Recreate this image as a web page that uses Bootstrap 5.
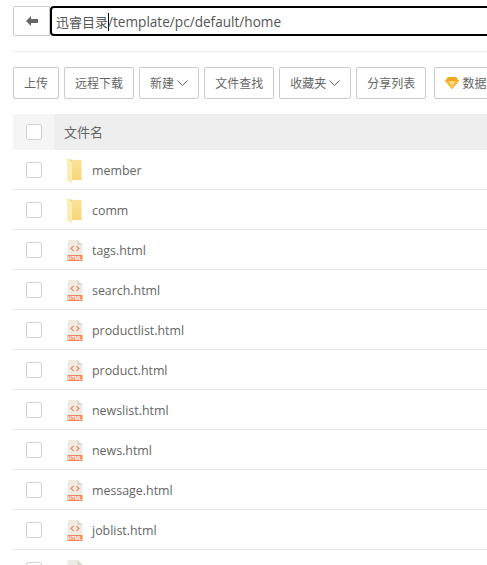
<!DOCTYPE html>
<html lang="zh"><head><meta charset="utf-8"><title>文件管理</title>
<link rel="stylesheet" href="https://cdn.jsdelivr.net/npm/bootstrap@5.3.0/dist/css/bootstrap.min.css">
<style>
html,body{height:565px;overflow:hidden;background:#fff}
body{font-family:"Open Sans","Noto Sans CJK SC",sans-serif;font-size:13px;color:#666}
.fm-page{width:800px;padding:6px 0 0 13px}
.fm-path{height:30px;flex-wrap:nowrap}
.fm-back{width:37px;height:30px;padding:0;border:1px solid #ccc;border-radius:2px 0 0 2px;background:#fff;display:flex;align-items:center;justify-content:center}
.fm-input{flex:1;height:30px;border:2px solid #000;border-radius:4px;padding:0 4px;font-size:13.6px;line-height:28px;color:#555;white-space:nowrap}
.fm-cjk{font-size:13px}
.fm-caret{display:inline-block;width:1px;height:18px;background:#000;vertical-align:-4px;margin-right:-1px}
.fm-rule{border-top:1px solid #eee;margin:15px 0 15px;opacity:1}
.fm-tools{gap:5px;flex-wrap:nowrap;margin-bottom:15px}
.fm-btn{height:32px;padding:2px 10px 0;border:1px solid #ccc;border-radius:2px;background:#fff;color:#666;font-size:12px;line-height:28px;white-space:nowrap;flex:none}
.fm-btn svg{vertical-align:1px}
.fm-gem{margin-left:3px}
.fm-row{height:40px;border-bottom:1px solid #e7e7e7;align-items:center}
.fm-head{height:36px;background:#eee;border:0;align-items:center}
.fm-check{width:41px;height:100%;display:flex;align-items:center;justify-content:center;flex:none}
.fm-head .fm-check{background:#f5f5f5}
.fm-box{width:16px;height:16px;border:1px solid #d2d2d2;border-radius:2px;background:#fff;display:block;margin-right:-1px}
.fm-icon{width:16px;margin:2px 9px 0 13px;flex:none;display:block}
.fm-name{font-size:12.4px;color:#666;padding-top:3px}
.fm-title{margin-left:10px;font-size:13px;color:#666;padding-top:2px}
</style></head>
<body>
<svg width="0" height="0" class="position-absolute">
<defs>
<linearGradient id="fg" x1="0" y1="0" x2="0" y2="1"><stop offset="0" stop-color="#fbe49b"/><stop offset="1" stop-color="#f8d371"/></linearGradient>
<symbol id="folder" viewBox="0 0 16 24">
<path d="M0 0H4L5 1H14.500V20.500H16V21H5V24L0 21Z" fill="url(#fg)"/>
<path d="M0 0L5 3.500V24L0 21Z" fill="#fcedb7"/>
<path d="M5 3.500L4 2.500V1H5Z" fill="#f4d27c"/>
</symbol>
<symbol id="html" viewBox="0 0 15 21">
<path d="M0 0H10L15 5V15H0Z" fill="#edebe3"/>
<path d="M10 0L15 5H10Z" fill="#d9d6cb"/>
<rect y="15" width="15" height="6" fill="#f0845a"/>
<path d="M6 6L3.500 8.500L6 11M9 6L11.500 8.500L9 11" fill="none" stroke="#ee8a62" stroke-width="1.200"/>
<text x="7.500" y="20" font-size="5" font-weight="700" text-anchor="middle" fill="#fff" font-family="Liberation Sans,sans-serif">HTML</text>
</symbol>
</defs>
</svg>
<div class="fm-page">
  <div class="fm-path d-flex">
    <button class="fm-back" type="button" aria-label="返回"><svg width="12" height="10" viewBox="0 0 12 10"><path d="M0 5L5 0V3H12V7H5V10Z" fill="#666"/></svg></button>
    <div class="fm-input"><span class="fm-cjk">迅睿目录</span><span class="fm-caret"></span>/template/pc/default/home</div>
  </div>
  <hr class="fm-rule">
  <div class="fm-tools d-flex">
    <button class="fm-btn" type="button">上传</button>
    <button class="fm-btn" type="button">远程下载</button>
    <button class="fm-btn" type="button">新建 <svg width="11" height="7" viewBox="0 0 11 7"><path d="M.5 .5L5.500 5.500L10.500 .5" fill="none" stroke="#666"/></svg></button>
    <button class="fm-btn" type="button">文件查找</button>
    <button class="fm-btn" type="button">收藏夹 <svg width="11" height="7" viewBox="0 0 11 7"><path d="M.5 .5L5.500 5.500L10.500 .5" fill="none" stroke="#666"/></svg></button>
    <button class="fm-btn" type="button">分享列表</button>
    <button class="fm-btn fm-gem" type="button"><svg width="14" height="12" viewBox="0 0 14 12" style="vertical-align:-1px"><path d="M3 0H11L14 4L7 12L0 4Z" fill="#f5a623"/><path d="M0 4H14L7 12Z" fill="#f9b93f"/><path d="M4 4L7 11L10 4Z" fill="#fdd77a"/></svg> 数据</button>
  </div>
  <div class="fm-head d-flex"><div class="fm-check"><span class="fm-box"></span></div><div class="fm-title">文件名</div></div>
  <div id="fm-rows">
    <div class="fm-row d-flex"><div class="fm-check"><span class="fm-box"></span></div><svg class="fm-icon" width="16" height="24"><use href="#folder"/></svg><div class="fm-name">member</div></div>
    <div class="fm-row d-flex"><div class="fm-check"><span class="fm-box"></span></div><svg class="fm-icon" width="16" height="24"><use href="#folder"/></svg><div class="fm-name">comm</div></div>
    <div class="fm-row d-flex"><div class="fm-check"><span class="fm-box"></span></div><svg class="fm-icon" width="16" height="21"><use href="#html"/></svg><div class="fm-name">tags.html</div></div>
    <div class="fm-row d-flex"><div class="fm-check"><span class="fm-box"></span></div><svg class="fm-icon" width="16" height="21"><use href="#html"/></svg><div class="fm-name">search.html</div></div>
    <div class="fm-row d-flex"><div class="fm-check"><span class="fm-box"></span></div><svg class="fm-icon" width="16" height="21"><use href="#html"/></svg><div class="fm-name">productlist.html</div></div>
    <div class="fm-row d-flex"><div class="fm-check"><span class="fm-box"></span></div><svg class="fm-icon" width="16" height="21"><use href="#html"/></svg><div class="fm-name">product.html</div></div>
    <div class="fm-row d-flex"><div class="fm-check"><span class="fm-box"></span></div><svg class="fm-icon" width="16" height="21"><use href="#html"/></svg><div class="fm-name">newslist.html</div></div>
    <div class="fm-row d-flex"><div class="fm-check"><span class="fm-box"></span></div><svg class="fm-icon" width="16" height="21"><use href="#html"/></svg><div class="fm-name">news.html</div></div>
    <div class="fm-row d-flex"><div class="fm-check"><span class="fm-box"></span></div><svg class="fm-icon" width="16" height="21"><use href="#html"/></svg><div class="fm-name">message.html</div></div>
    <div class="fm-row d-flex"><div class="fm-check"><span class="fm-box"></span></div><svg class="fm-icon" width="16" height="21"><use href="#html"/></svg><div class="fm-name">joblist.html</div></div>
    <div class="fm-row d-flex"><div class="fm-check"><span class="fm-box"></span></div><svg class="fm-icon" width="16" height="21"><use href="#html"/></svg></div>
  </div>
</div>
<script src="https://cdn.jsdelivr.net/npm/bootstrap@5.3.0/dist/js/bootstrap.bundle.min.js"></script>
</body></html>
